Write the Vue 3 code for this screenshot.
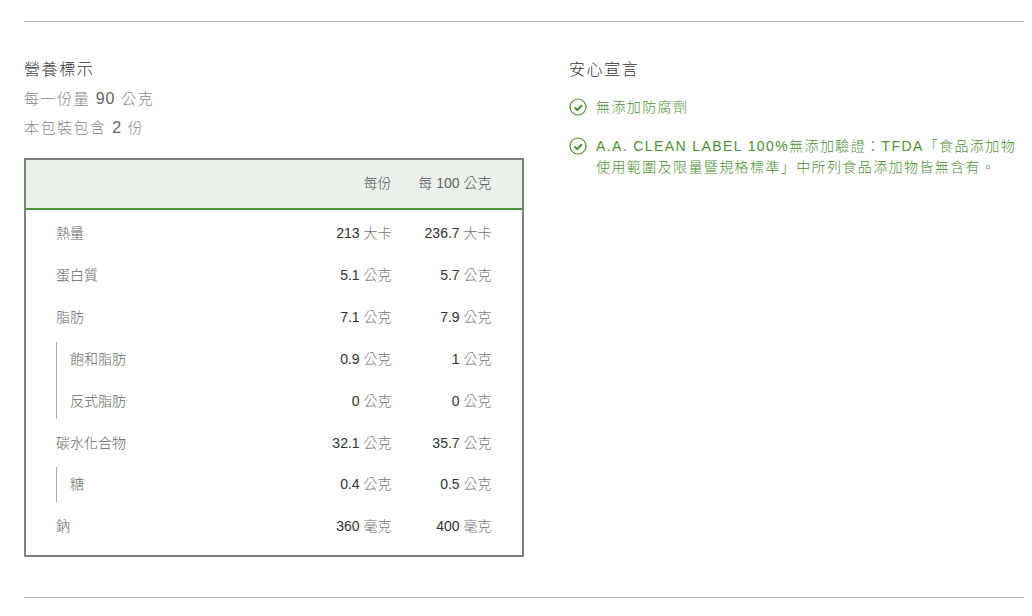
<script setup>
const groups = [
  { rows: [{ name: '熱量', a: '213', b: '236.7', u: '大卡' }] },
  { rows: [{ name: '蛋白質', a: '5.1', b: '5.7', u: '公克' }] },
  { rows: [{ name: '脂肪', a: '7.1', b: '7.9', u: '公克' }] },
  { sub: true, rows: [
    { name: '飽和脂肪', a: '0.9', b: '1', u: '公克' },
    { name: '反式脂肪', a: '0', b: '0', u: '公克' }
  ] },
  { rows: [{ name: '碳水化合物', a: '32.1', b: '35.7', u: '公克' }] },
  { sub: true, rows: [{ name: '糖', a: '0.4', b: '0.5', u: '公克' }] },
  { rows: [{ name: '鈉', a: '360', b: '400', u: '毫克' }] }
]
</script>

<template>
  <div class="page">
    <hr class="rule" />
    <div class="cols">
      <section class="left">
        <h2 class="title">營養標示</h2>
        <p class="meta">每一份量 <span class="num">90</span> 公克</p>
        <p class="meta meta2">本包裝包含 <span class="num">2</span> 份</p>
        <div class="table">
          <div class="head">
            <span class="cell">每份</span>
            <span class="cell wide">每 <span class="num">100</span> 公克</span>
          </div>
          <div class="body">
            <div v-for="(g, i) in groups" :key="i" :class="['group', { sub: g.sub }]">
              <div v-for="r in g.rows" :key="r.name" class="row">
                <span class="name">{{ r.name }}</span>
                <span class="cell"><b class="val">{{ r.a }}</b> {{ r.u }}</span>
                <span class="cell wide"><b class="val">{{ r.b }}</b> {{ r.u }}</span>
              </div>
            </div>
          </div>
        </div>
      </section>
      <section class="right">
        <h2 class="title">安心宣言</h2>
        <ul class="claims">
          <li class="claim">
            <svg class="check" width="18" height="18" viewBox="0 0 18 18" fill="none">
              <circle cx="9" cy="9" r="8" stroke="#4b9234" stroke-width="1.2" />
              <path d="M5.6 9.4 8.2 12 13 7.2" stroke="#4b9234" stroke-width="2" />
            </svg>
            <span>無添加防腐劑</span>
          </li>
          <li class="claim">
            <svg class="check" width="18" height="18" viewBox="0 0 18 18" fill="none">
              <circle cx="9" cy="9" r="8" stroke="#4b9234" stroke-width="1.2" />
              <path d="M5.6 9.4 8.2 12 13 7.2" stroke="#4b9234" stroke-width="2" />
            </svg>
            <span>A.A. CLEAN LABEL 100%無添加驗證：TFDA「食品添加物使用範圍及限量暨規格標準」中所列食品添加物皆無含有。</span>
          </li>
        </ul>
      </section>
    </div>
    <hr class="rule rule2" />
  </div>
</template>

<style>
html, body { margin: 0; background: #fff; }
</style>

<style scoped>
.page {
  width: 1024px;
  height: 616px;
  overflow: hidden;
  box-sizing: border-box;
  padding: 21px 0 0 24px;
  font-family: "Liberation Sans", "Noto Sans CJK TC", sans-serif;
  color: #333;
}
.rule { margin: 0; border: 0; height: 1px; background: #b3b3b3; }
.rule2 { margin-top: 40px; }
.cols { display: flex; padding-top: 37px; }
.left { width: 500px; flex: none; }
.right { margin-left: 45px; width: 455px; flex: none; }
.title {
  margin: 0;
  font-size: 16px;
  line-height: 22px;
  font-weight: 300;
  letter-spacing: 1.6px;
  color: #333;
}
.meta {
  margin: 8px 0 0;
  font-size: 15px;
  line-height: 20px;
  letter-spacing: 1.5px;
  font-weight: 300;
  color: #888;
}
.meta2 { margin-top: 9px; }
.num { color: #666; font-weight: 400; }
.meta .num { font-size: 16px; letter-spacing: 1px; }
.table {
  margin-top: 20px;
  width: 500px;
  height: 399px;
  box-sizing: border-box;
  border: 2px solid #808080;
}
.head {
  display: flex;
  justify-content: flex-end;
  align-items: center;
  height: 44px;
  padding: 0 30.5px 4px 0;
  background: #eaf1ea;
  border-bottom: 2px solid #4b9234;
  font-size: 14px;
  font-weight: 300;
  color: #555;
}
.body { padding: 1.4px 30.5px 0 30px; }
.row {
  display: flex;
  align-items: center;
  justify-content: flex-end;
  height: 41.85px;
  font-size: 14px;
  font-weight: 300;
  color: #777;
}
.name { margin-right: auto; color: #666; }
.cell { text-align: right; white-space: nowrap; }
.cell.wide { width: 100px; }
.val { font-weight: 400; color: #333; }
.group.sub { position: relative; padding-left: 14px; }
.group.sub::before {
  content: "";
  position: absolute;
  left: 0;
  top: 5px;
  bottom: 2px;
  width: 1px;
  background: #aaa;
}
.claims { list-style: none; margin: 16px 0 0; padding: 0; }
.claim {
  display: flex;
  gap: 9px;
  font-size: 14px;
  line-height: 21px;
  letter-spacing: 1.4px;
  font-weight: 300;
  color: #4b9234;
  margin-bottom: 18px;
}
.check { flex: none; margin-top: 1px; }
</style>
